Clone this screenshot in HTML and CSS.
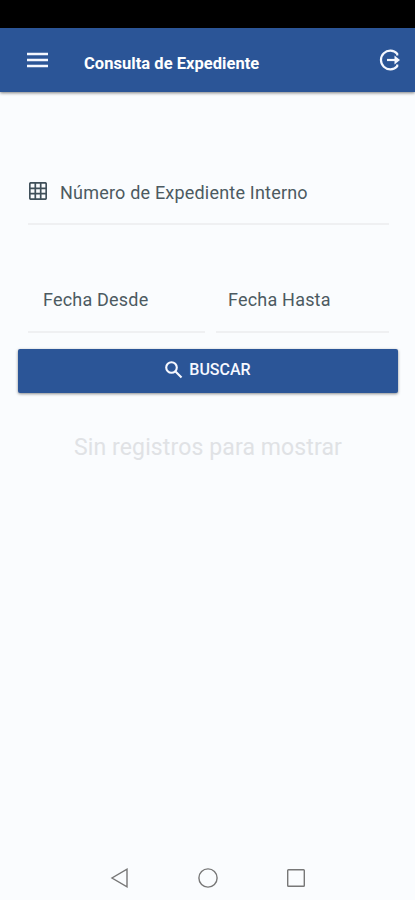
FILE: index.html
```html
<!DOCTYPE html>
<html lang="es">
<head>
<meta charset="utf-8">
<title>Consulta de Expediente</title>
<link rel="stylesheet" href="styles.css">
</head>
<body>
<div class="status"></div>
<header class="bar">
  <svg class="menu" viewBox="0 0 22 16"><path d="M0 2h21M0 8h21M0 14h21"/></svg>
  <h1 class="title">Consulta de Expediente</h1>
  <svg class="logout" viewBox="0 0 22 22"><path d="M18.200 6.500V4.800A9.300 9.300 0 1 0 18.200 17.200V15.500" /><path d="M8 11h9"/><path class="tip" d="M15.500 6.500L21 11l-5.500 4.500z"/></svg>
</header>
<main class="content">
  <div class="field number">
    <svg class="grid" viewBox="0 0 18 18"><rect x=".8" y=".8" width="16.400" height="16.400" rx="1.200"/><path d="M6.300 1v16M11.700 1v16M1 6.300h16M1 11.700h16"/></svg>
    <label>Número de Expediente Interno</label>
  </div>
  <div class="dates">
    <div class="field"><label class="from">Fecha Desde</label></div>
    <div class="field"><label class="to">Fecha Hasta</label></div>
  </div>
  <button class="search">
    <svg class="lens" viewBox="0 0 18 18"><circle cx="6.500" cy="6.500" r="5.300"/><path d="M10.500 10.500l6 6"/></svg>
    <span>BUSCAR</span>
  </button>
  <p class="empty">Sin registros para mostrar</p>
</main>
<nav class="system">
  <svg viewBox="0 0 20 20"><path d="M17 1.200v17.600L2 10z"/></svg>
  <svg viewBox="0 0 20 20"><circle cx="10" cy="10" r="9.100"/></svg>
  <svg viewBox="0 0 20 20"><rect x="1.700" y="1.700" width="16.600" height="16.600" rx=".8"/></svg>
</nav>
</body>
</html>
```
FILE: styles.css
```css
* { box-sizing: border-box; }
body {
  margin: 0;
  height: 900px;
  display: flex;
  flex-direction: column;
  overflow: hidden;
  background: #fafcfe;
  font-family: Roboto, "Liberation Sans", sans-serif;
}
svg { display: block; flex: none; fill: none; }
.status { height: 28px; background: #000; }
.bar {
  height: 64px;
  display: flex;
  align-items: center;
  padding: 0 14px 0 27px;
  background: #2b5597;
  box-shadow: 0 1px 3px rgba(0, 0, 0, .5);
  color: #fff;
}
.menu { width: 22px; height: 16px; stroke: #f4f7ff; stroke-width: 2.4; }
.title { margin: 8px auto 0 35px; font-size: 16.5px; line-height: 20px; font-weight: 700; letter-spacing: .04px; white-space: nowrap; }
.logout { width: 22px; height: 22px; stroke: #f4f7ff; stroke-width: 2.2; }
.tip { fill: #f4f7ff; stroke: none; }
.content { flex: 1; padding: 68px 17px 0 18px; }
.field { border-bottom: 2px solid #eff0f2; color: #4c5a61; font-size: 18px; line-height: 24px; letter-spacing: .2px; white-space: nowrap; }
.number { display: flex; height: 65px; margin: 0 9px 0 10px; padding-top: 21px; }
.grid { width: 18px; height: 18px; margin: 1px 13px 0 1px; stroke: #40505a; stroke-width: 1.7; }
.dates { display: grid; grid-template-columns: 177px 173px; gap: 11px; margin: 44px 9px 0 10px; }
.dates .field { height: 64px; padding: 19px 0 0 15px; }
.dates .field + .field { padding-left: 12px; }
.search {
  width: 100%;
  height: 44px;
  margin: 16px 0 0;
  padding: 0 0 3px;
  display: flex;
  align-items: center;
  justify-content: center;
  gap: 6px;
  border: 0;
  border-radius: 2px;
  background: #2b5597;
  box-shadow: 0 1px 3px rgba(0, 0, 0, .45);
  color: #f6f8ff;
  font: 500 16px/20px Roboto, sans-serif;
}
.lens { width: 18px; height: 18px; stroke: #f6f8ff; stroke-width: 2.1; }
.empty { margin: 40px 0 0; text-align: center; font-size: 23px; line-height: 30px; letter-spacing: .12px; color: #e0e2e5; white-space: nowrap; }
.system { height: 44px; display: flex; justify-content: center; gap: 68px; padding-top: 12px; }
.system svg { width: 20px; height: 20px; stroke: #777; stroke-width: 1.4; }
```
